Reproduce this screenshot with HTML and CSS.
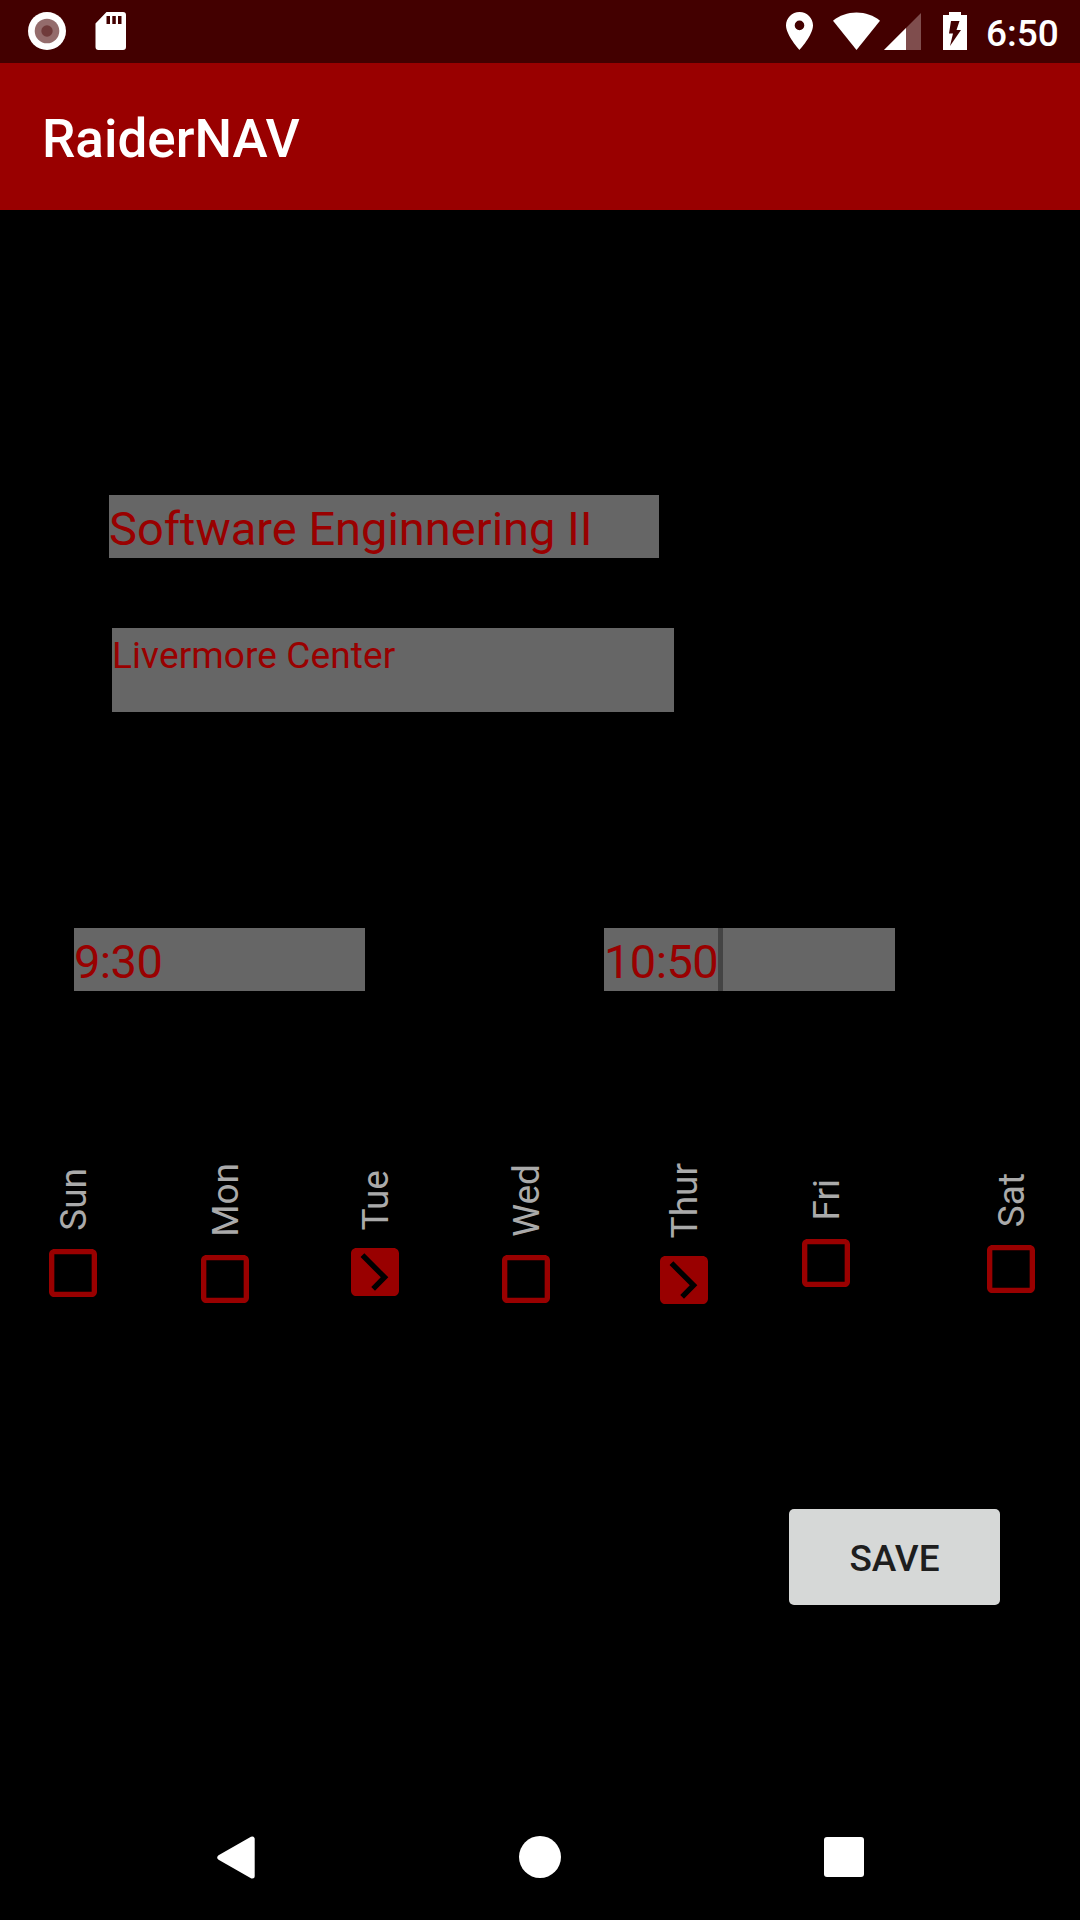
FILE: index.html
```html
<!DOCTYPE html>
<html lang="en">
<head>
<meta charset="utf-8">
<title>RaiderNAV</title>
<link rel="stylesheet" href="styles.css">
</head>
<body>
<svg class="defs" width="0" height="0">
  <symbol id="box-off" viewBox="3 3 18 18"><path d="M19 5v14H5V5h14m0-2H5c-1.1 0-2 .9-2 2v14c0 1.1.9 2 2 2h14c1.1 0 2-.9 2-2V5c0-1.1-.9-2-2-2z"/></symbol>
  <symbol id="box-on" viewBox="3 3 18 18"><path transform="rotate(-90 12 12)" d="M19 3H5c-1.11 0-2 .9-2 2v14c0 1.1.89 2 2 2h14c1.11 0 2-.9 2-2V5c0-1.1-.89-2-2-2zm-9 14l-5-5 1.41-1.41L10 14.17l7.59-7.59L19 8l-9 9z"/></symbol>
</svg>
<div class="screen">
  <header class="status">
    <svg class="record" width="38" height="38" viewBox="0 0 38 38"><circle cx="19" cy="19" r="19" fill="#fff"/><circle cx="19" cy="19" r="12.3" fill="#946c6c"/><circle cx="19" cy="19" r="5.7" fill="#703b3b"/></svg>
    <svg class="sdcard" width="31" height="38" viewBox="0 0 31 38"><path fill="#fff" fill-rule="evenodd" d="M11.500 0H28q3 0 3 3V35q0 3-3 3H3.500q-3 0-3-3V11.500zM11.500 4v8h3.500V4zM17.300 4v8h3.500V4zM23 4v8h3.500V4z"/></svg>
    <svg class="pin" width="27" height="38" viewBox="0 0 27 38"><path fill="#fff" fill-rule="evenodd" d="M13.500 0C6 0 0 6 0 13.300 0 23.300 13.500 38 13.500 38S27 23.300 27 13.300C27 6 21 0 13.500 0zm0 8.600a4.800 4.800 0 1 1 0 9.600 4.800 4.800 0 0 1 0-9.600z"/></svg>
    <svg class="wifi" width="47" height="38" viewBox="0 0 47 38"><path fill="#fff" d="M23.500 38L0 8.800C6.500 3.600 14.500.6 23.500.6S40.500 3.600 47 8.800z"/></svg>
    <svg class="signal" width="37" height="38" viewBox="0 0 37 38"><path fill="#7f4d4d" d="M0 38L37 1V38z"/><path fill="#fff" d="M0 38L22 16V38z"/></svg>
    <svg class="battery" width="24" height="38" viewBox="0 0 24 38"><path fill="#fff" fill-rule="evenodd" d="M6 0H18V3H24V38H0V3H6zM8 9L6 21.500H10L7 34 18 18H13.500L16.500 9z"/></svg>
    <time class="clock">6:50</time>
  </header>
  <div class="appbar"><h1>RaiderNAV</h1></div>
  <main>
    <div class="field course">Software Enginnering II</div>
    <div class="field place">Livermore Center</div>
    <div class="times">
      <div class="field">9:30</div>
      <div class="field">10:50<span class="caret"></span></div>
    </div>
    <div class="days">
      <label class="day sun"><span>Sun</span><svg><use href="#box-off"/></svg></label>
      <label class="day mon"><span>Mon</span><svg><use href="#box-off"/></svg></label>
      <label class="day tue"><span>Tue</span><svg><use href="#box-on"/></svg></label>
      <label class="day wed"><span>Wed</span><svg><use href="#box-off"/></svg></label>
      <label class="day thu"><span>Thur</span><svg><use href="#box-on"/></svg></label>
      <label class="day fri"><span>Fri</span><svg><use href="#box-off"/></svg></label>
      <label class="day sat"><span>Sat</span><svg><use href="#box-off"/></svg></label>
    </div>
    <button class="save">SAVE</button>
  </main>
  <nav class="navbar">
    <svg width="38" height="43" viewBox="0 0 38 43"><path fill="#fff" stroke="#fff" stroke-width="5" stroke-linejoin="round" d="M35.200 3V40L2.800 21.500z"/></svg>
    <svg width="43" height="43" viewBox="0 0 43 43"><circle cx="22" cy="21" r="21" fill="#fff"/></svg>
    <svg width="40" height="40" viewBox="0 0 40 40"><rect width="40" height="40" rx="3" fill="#fff"/></svg>
  </nav>
</div>
</body>
</html>
```
FILE: styles.css
```css
* { box-sizing: border-box; }
body { margin: 0; background: #000; font-family: Roboto, sans-serif; }
.defs { position: absolute; }
svg { display: block; flex: none; }
.screen { width: 1080px; height: 1920px; display: flex; flex-direction: column; overflow: hidden; }

.status { height: 63px; background: #430000; display: flex; align-items: flex-start; padding: 12px 0 0 28px; }
.sdcard { margin-left: 29px; }
.pin { margin-left: 660px; }
.wifi { margin-left: 20px; }
.signal { margin-left: 4px; }
.battery { margin-left: 22px; }
.clock { margin-left: 19px; color: #fff; font-size: 37px; font-weight: 500; line-height: 43px; }

.appbar { height: 147px; background: #990000; display: flex; align-items: center; padding: 4px 0 0 42px; }
h1 { margin: 0; color: #fff; font-size: 53px; font-weight: 500; line-height: 62px; }

main { flex: 1; display: flex; flex-direction: column; align-items: flex-start; }
.field { height: 63px; padding-top: 6px; background: #666; color: #990000; font-size: 47px; line-height: 56px; white-space: nowrap; display: flex; }
.course { width: 550px; margin: 285px 0 0 109px; }
.place { width: 562px; height: 84px; margin: 70px 0 0 112px; font-size: 37px; line-height: 43px; letter-spacing: 0.1px; }
.times { display: flex; gap: 239px; margin: 216px 0 0 74px; }
.times .field { width: 291px; letter-spacing: -0.6px; }
.caret { width: 5px; height: 63px; margin-top: -6px; background: #444; }

.days { height: 160px; margin-top: 159px; padding-left: 49px; display: grid; grid-template-columns: 152px 150px 151px 158px 142px 185px 48px; }
.day { width: 48px; display: flex; flex-direction: column; justify-content: flex-end; }
.day span { writing-mode: vertical-rl; transform: rotate(180deg); width: 47px; margin-left: 1px; margin-bottom: 18px; line-height: 47px; font-size: 37px; color: #aaa; }
.day svg { width: 48px; height: 48px; fill: #990000; }
.sun { padding-bottom: 13px; }
.mon { padding-bottom: 7px; }
.tue { padding-bottom: 14px; }
.wed { padding-bottom: 7px; }
.thu { padding-bottom: 6px; }
.fri { padding-bottom: 23px; }
.sat { padding-bottom: 17px; }

.save { width: 211px; height: 96px; margin: 199px 0 0 789px; padding: 2px 0 0; border: 0; border-radius: 5px; background: #d6d8d7; color: #1e1e1e; font: 500 37px/43px Roboto, sans-serif; }

.navbar { height: 126px; padding: 0 216px 0 217px; display: flex; align-items: center; justify-content: space-between; }
```
